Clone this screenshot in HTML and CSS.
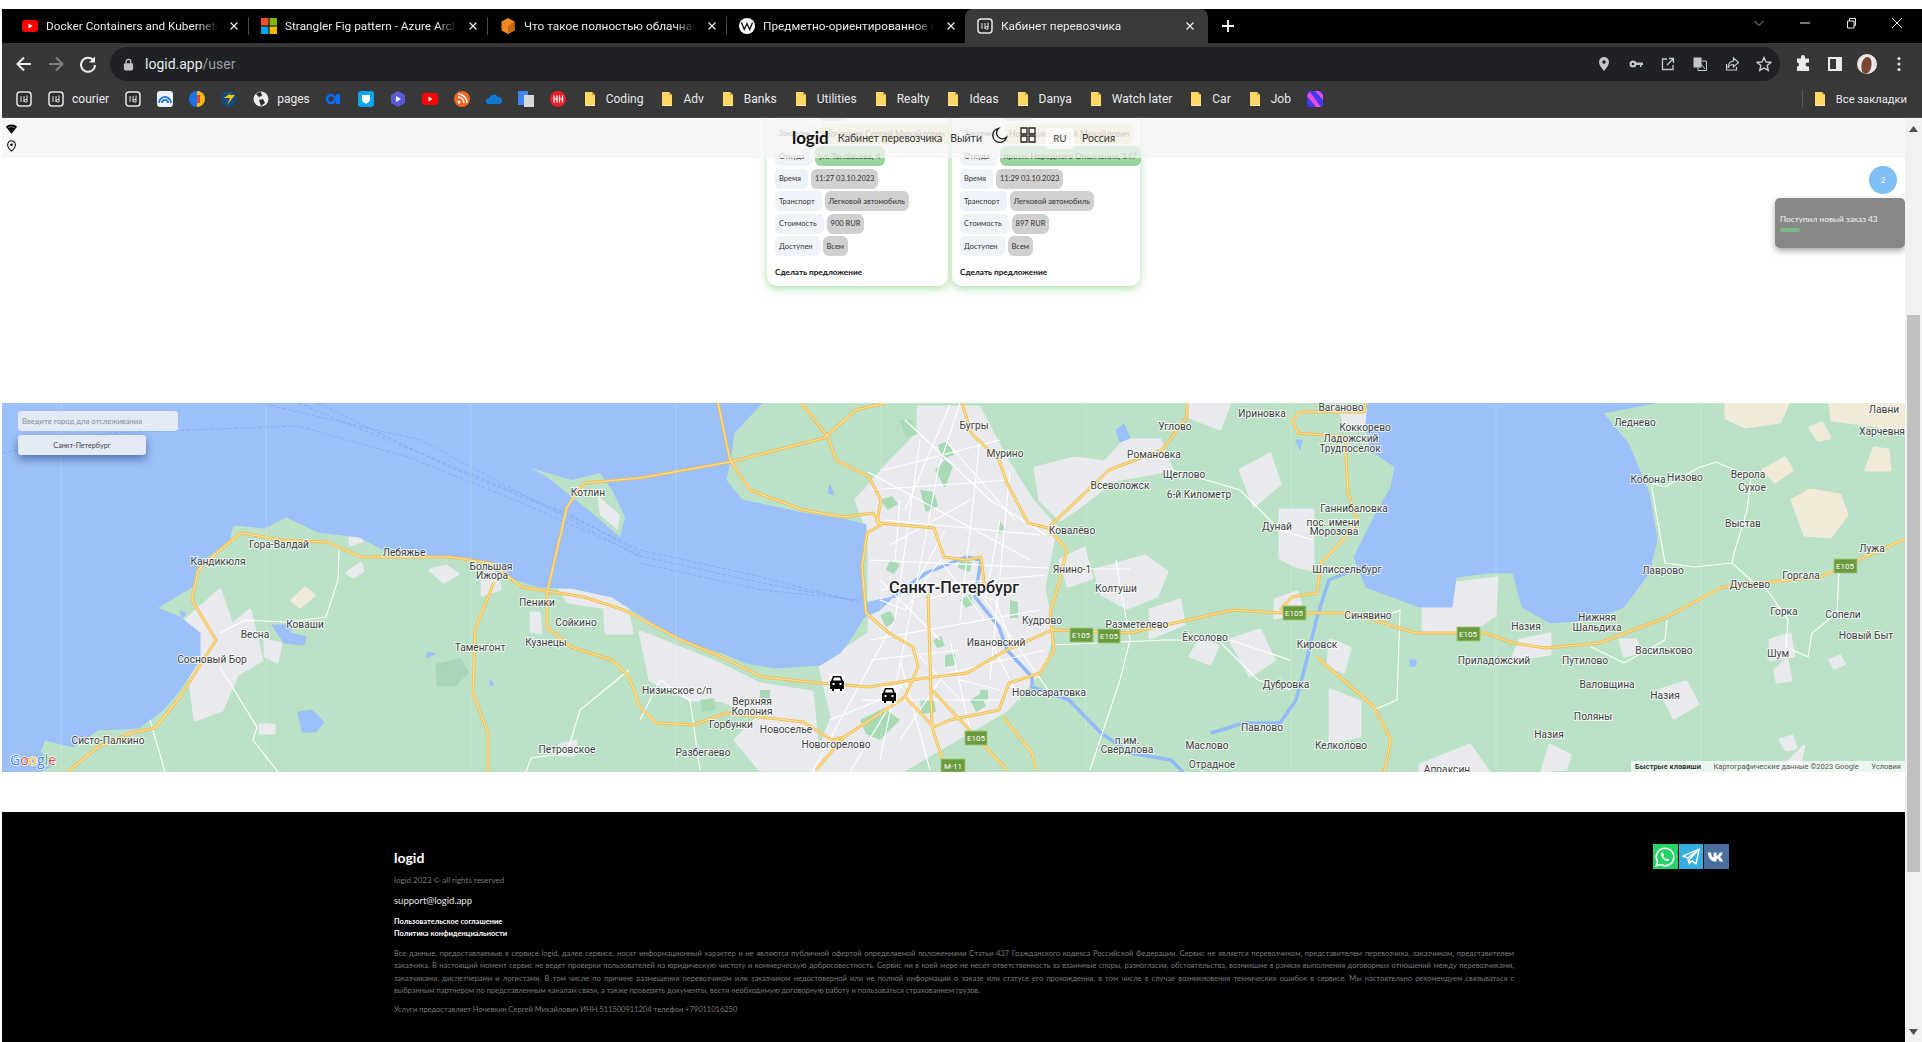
FILE: index.html
```html
<!DOCTYPE html>
<html lang="ru">
<head>
<meta charset="utf-8">
<title>Кабинет перевозчика</title>
<link rel="stylesheet" href="styles.css">
</head>
<body>
<svg class="sprite" aria-hidden="true">
  <symbol id="i-id" viewBox="0 0 16 16"><rect x="1" y="1" width="14" height="14" rx="3" fill="#2b2b2b" stroke="#e6e6e6" stroke-width="1.500"/><path d="M5 5v6M8 5v6M11 4.500v6.500M11 8.500H9.500a1.200 1.200 0 0 0 0 2.500H11" fill="none" stroke="#e6e6e6" stroke-width="1"/></symbol>
  <symbol id="i-yt" viewBox="0 0 16 16"><rect y="2" width="16" height="12" rx="3" fill="#f00"/><path d="M6.500 5.500v5l4-2.500z" fill="#fff"/></symbol>
  <symbol id="i-ms" viewBox="0 0 16 16"><rect width="7.500" height="7.500" fill="#f25022"/><rect x="8.500" width="7.500" height="7.500" fill="#7fba00"/><rect y="8.500" width="7.500" height="7.500" fill="#00a4ef"/><rect x="8.500" y="8.500" width="7.500" height="7.500" fill="#ffb900"/></symbol>
  <symbol id="i-hex" viewBox="0 0 16 16"><path d="M8 0l6.500 3.500v9L8 16l-6.500-3.500v-9z" fill="#f08a24"/><path d="M8 8l6.500-4.500v9L8 16z" fill="#c96a12"/></symbol>
  <symbol id="i-w" viewBox="0 0 16 16"><circle cx="8" cy="8" r="8" fill="#fff"/><path d="M2.500 4.500l2.800 7 2.700-6 2.700 6 2.800-7" fill="none" stroke="#111" stroke-width="1.300"/></symbol>
  <symbol id="i-folder" viewBox="0 0 16 16"><path d="M3 1h7l3 3v11H3z" fill="#fdd663"/><path d="M10 1l3 3h-3z" fill="#c9a93f"/><path d="M4.500 14.500h8.500" stroke="#fff3c4" stroke-width="1"/></symbol>
  <symbol id="i-close" viewBox="0 0 16 16"><path d="M4.500 4.500l7 7M11.500 4.500l-7 7" stroke="#e8eaed" stroke-width="1.300" fill="none"/></symbol>
</svg>

<div class="chrome">
  <div class="tabstrip">
    <div class="tab"><svg class="fav"><use href="#i-yt"/></svg><span class="tab-title">Docker Containers and Kubernetes</span><svg class="tab-x"><use href="#i-close"/></svg></div>
    <div class="tab"><svg class="fav"><use href="#i-ms"/></svg><span class="tab-title">Strangler Fig pattern - Azure Architecture</span><svg class="tab-x"><use href="#i-close"/></svg></div>
    <div class="tab"><svg class="fav"><use href="#i-hex"/></svg><span class="tab-title">Что такое полностью облачная среда</span><svg class="tab-x"><use href="#i-close"/></svg></div>
    <div class="tab tab-last"><svg class="fav"><use href="#i-w"/></svg><span class="tab-title">Предметно-ориентированное проект</span><svg class="tab-x"><use href="#i-close"/></svg></div>
    <div class="tab tab-active"><svg class="fav"><use href="#i-id"/></svg><span class="tab-title">Кабинет перевозчика</span><svg class="tab-x"><use href="#i-close"/></svg></div>
    <svg class="tab-new" viewBox="0 0 16 16"><path d="M8 2v12M2 8h12" stroke="#fff" stroke-width="1.800"/></svg>
    <div class="winctl">
      <svg viewBox="0 0 16 16"><path d="M3.500 6l4.500 4.500L12.500 6" fill="none" stroke="#9aa0a6"/></svg>
      <svg viewBox="0 0 16 16"><path d="M3 8h10" stroke="#e8eaed"/></svg>
      <svg viewBox="0 0 16 16"><path d="M4.500 6h6.500v7H4.500zM6.500 6V3.500h6v7H11" fill="none" stroke="#e8eaed"/></svg>
      <svg viewBox="0 0 16 16"><path d="M3 3l10 10M13 3L3 13" stroke="#e8eaed"/></svg>
    </div>
  </div>

  <div class="toolbar">
    <button class="tbtn"><svg viewBox="0 0 20 20"><path d="M17 10H4M10 3.500L3.500 10l6.500 6.500" fill="none" stroke="#e8eaed" stroke-width="2"/></svg></button>
    <button class="tbtn"><svg viewBox="0 0 20 20"><path d="M3 10h13M10 3.500l6.500 6.500-6.500 6.500" fill="none" stroke="#7c7f82" stroke-width="2"/></svg></button>
    <button class="tbtn"><svg viewBox="0 0 20 20"><path d="M15.500 6.500A7 7 0 1 0 17 11" fill="none" stroke="#e8eaed" stroke-width="2"/><path d="M17 2.500v6h-6z" fill="#e8eaed"/></svg></button>
    <div class="omnibox">
      <svg class="lock" viewBox="0 0 12 14"><rect x="1" y="5.500" width="10" height="8" rx="1.500" fill="#bdc1c6"/><path d="M3.500 6V4a2.500 2.500 0 0 1 5 0v2" fill="none" stroke="#bdc1c6" stroke-width="1.400"/></svg>
      <span class="url">logid.app<span class="url-path">/user</span></span>
      <div class="omni-actions">
        <svg viewBox="0 0 16 16"><path d="M8 1a5 5 0 0 0-5 5c0 3.500 5 9 5 9s5-5.500 5-9a5 5 0 0 0-5-5z" fill="#c4c7c9"/><circle cx="8" cy="6" r="1.800" fill="#202124"/></svg>
        <svg viewBox="0 0 16 16"><circle cx="5" cy="8" r="3.500" fill="#c4c7c9"/><circle cx="5" cy="8" r="1.300" fill="#202124"/><path d="M8 6.500h7v2.500h-1.500v2H12V9H8z" fill="#c4c7c9"/></svg>
        <svg viewBox="0 0 16 16"><path d="M13 9v4.500H2.500V3H7M9 2.500h4.500V7M13.500 2.500L7 9" fill="none" stroke="#c4c7c9" stroke-width="1.300"/></svg>
        <svg viewBox="0 0 16 16"><rect x="1.500" y="1.500" width="8" height="10" fill="#c4c7c9"/><path d="M9.500 5H14.500v9.500H6V11.500" fill="none" stroke="#c4c7c9"/><path d="M9 8l4 5" stroke="#c4c7c9"/></svg>
        <svg viewBox="0 0 16 16"><path d="M2.500 8v6h10v-3M9.500 2l5 4.500-5 4.500V8.500C7 8.500 5 9.500 4 12c0-4 2-6.500 5.500-7z" fill="none" stroke="#c4c7c9" stroke-width="1.200"/></svg>
        <svg viewBox="0 0 16 16"><path d="M8 1.500l2 4.500 4.800.4-3.600 3.200 1.100 4.800L8 11.900l-4.300 2.500 1.100-4.800L1.200 6.400 6 6z" fill="none" stroke="#d5d7d9" stroke-width="1.300"/></svg>
      </div>
    </div>
    <button class="tbtn"><svg viewBox="0 0 20 20"><path d="M8 3a2 2 0 0 1 4 0v1.500h4v4h-1.500a2 2 0 0 0 0 4H16V17H4v-4.500a2 2 0 0 0 0-4V4.500h4z" fill="#e8eaed"/></svg></button>
    <button class="tbtn"><svg viewBox="0 0 20 20"><rect x="3" y="3" width="14" height="14" fill="#e8eaed"/><rect x="5" y="5" width="6" height="10" fill="#373737"/></svg></button>
    <button class="tbtn"><svg viewBox="0 0 22 22"><circle cx="11" cy="11" r="11" fill="#e8e8e8"/><path d="M6 20c-2-5-2-12 3-16 4-2 7 1 7 6s-1 8-4 11c-2 1-4 0-6-1z" fill="#7a4632"/></svg></button>
    <button class="tbtn"><svg viewBox="0 0 20 20"><circle cx="10" cy="4.500" r="1.500" fill="#e8eaed"/><circle cx="10" cy="10" r="1.500" fill="#e8eaed"/><circle cx="10" cy="15.500" r="1.500" fill="#e8eaed"/></svg></button>
  </div>

  <div class="bookmarks">
    <div class="bm"><svg class="fav"><use href="#i-id"/></svg></div>
    <div class="bm"><svg class="fav"><use href="#i-id"/></svg><span>courier</span></div>
    <div class="bm"><svg class="fav"><use href="#i-id"/></svg></div>
    <div class="bm"><svg class="fav" viewBox="0 0 16 16"><rect width="16" height="16" rx="3" fill="#eef3fb"/><path d="M2 12a6 6 0 0 1 12 0M5 12a3 3 0 0 1 6 0" fill="none" stroke="#2f7fe0" stroke-width="2"/></svg></div>
    <div class="bm"><svg class="fav" viewBox="0 0 16 16"><circle cx="8" cy="8" r="8" fill="#1a73e8"/><path d="M8 0a8 8 0 0 1 0 16z" fill="#fbbc04"/><path d="M8 4h3v8H8z" fill="#ea4335"/></svg></div>
    <div class="bm"><svg class="fav" viewBox="0 0 16 16"><circle cx="8" cy="8" r="8" fill="#174a7c"/><path d="M3 7h6l-3 7 8-10H8l3-3z" fill="#f7c600"/></svg></div>
    <div class="bm"><svg class="fav" viewBox="0 0 16 16"><circle cx="8" cy="8" r="7.500" fill="#e8eaed"/><path d="M8 1a7 7 0 0 0-5 2l3 3 3-1zM10 8l-4 1 2 6 4-3z" fill="#2b2b2b"/></svg><span>pages</span></div>
    <div class="bm"><svg class="fav" viewBox="0 0 16 16"><circle cx="5" cy="8" r="4" fill="none" stroke="#0a6cff" stroke-width="2.500"/><path d="M10 3h4v10h-4z" fill="#0a6cff"/></svg></div>
    <div class="bm"><svg class="fav" viewBox="0 0 16 16"><rect width="16" height="16" rx="3" fill="#0aa5f5"/><path d="M4 4h8v6l-4 3-4-3z" fill="#fff"/></svg></div>
    <div class="bm"><svg class="fav" viewBox="0 0 16 16"><path d="M8 0l7 4v8l-7 4-7-4V4z" fill="#5a5ad6"/><path d="M6 5l5 3-5 3z" fill="#fff"/></svg></div>
    <div class="bm"><svg class="fav"><use href="#i-yt"/></svg></div>
    <div class="bm"><svg class="fav" viewBox="0 0 16 16"><circle cx="8" cy="8" r="8" fill="#f26522"/><circle cx="5" cy="11" r="1.500" fill="#fff"/><path d="M4 6a6 6 0 0 1 6 6M4 3a9 9 0 0 1 9 9" fill="none" stroke="#fff" stroke-width="1.500"/></svg></div>
    <div class="bm"><svg class="fav" viewBox="0 0 16 16"><path d="M3 13a3 3 0 0 1 0-6 5 5 0 0 1 9-1 3.500 3.500 0 0 1 1 7z" fill="#0f78d4"/></svg></div>
    <div class="bm"><svg class="fav" viewBox="0 0 16 16"><rect width="10" height="14" fill="#4285f4"/><rect x="6" y="4" width="10" height="12" fill="#d9d9d9"/></svg></div>
    <div class="bm"><svg class="fav" viewBox="0 0 16 16"><circle cx="8" cy="8" r="8" fill="#e8202a"/><path d="M4 4.500v7M4 8h3M7 4.500v7M9.500 4.500v7M9.500 8h3M12.500 4.500v7" stroke="#fff" stroke-width="1.200"/></svg></div>
    <div class="bm"><svg class="fav"><use href="#i-folder"/></svg><span>Coding</span></div>
    <div class="bm"><svg class="fav"><use href="#i-folder"/></svg><span>Adv</span></div>
    <div class="bm"><svg class="fav"><use href="#i-folder"/></svg><span>Banks</span></div>
    <div class="bm"><svg class="fav"><use href="#i-folder"/></svg><span>Utilities</span></div>
    <div class="bm"><svg class="fav"><use href="#i-folder"/></svg><span>Realty</span></div>
    <div class="bm"><svg class="fav"><use href="#i-folder"/></svg><span>Ideas</span></div>
    <div class="bm"><svg class="fav"><use href="#i-folder"/></svg><span>Danya</span></div>
    <div class="bm"><svg class="fav"><use href="#i-folder"/></svg><span>Watch later</span></div>
    <div class="bm"><svg class="fav"><use href="#i-folder"/></svg><span>Car</span></div>
    <div class="bm"><svg class="fav"><use href="#i-folder"/></svg><span>Job</span></div>
    <div class="bm"><svg class="fav" viewBox="0 0 16 16"><rect width="16" height="16" rx="3" fill="#3c3cf0"/><path d="M0 5l9 11h5L3 1zM8 0l8 9V4l-4-4z" fill="#f04bd8"/></svg></div>
    <div class="bm bm-all"><svg class="fav"><use href="#i-folder"/></svg><span>Все закладки</span></div>
  </div>
</div>

<div class="viewport">
  <main class="page">
    <header class="nav">
      <div class="status-icons">
        <svg viewBox="0 0 14 12"><path d="M1 3.500C4 .5 10 .5 13 3.500L7 11z" fill="#000"/><path d="M3.500 4.500c2-1.200 5-1.200 7 0" stroke="#fff" fill="none" stroke-width=".6"/></svg>
        <svg viewBox="0 0 14 14"><path d="M7 1a4.500 4.500 0 0 0-4.500 4.500C2.500 9 7 13 7 13s4.500-4 4.500-7.500A4.500 4.500 0 0 0 7 1z" fill="none" stroke="#000" stroke-width="1.200"/><circle cx="7" cy="5.500" r="1.500" fill="#000"/></svg>
      </div>
      <span class="brand">logid</span>
      <a class="nav-link">Кабинет перевозчика</a>
      <a class="nav-link">Выйти</a>
      <svg class="nav-ico" viewBox="0 0 16 16"><path d="M6.500 1.500a7 7 0 1 0 8 8.800 5.800 5.800 0 0 1-8-8.800z" fill="none" stroke="#222" stroke-width="1.400"/></svg>
      <svg class="nav-ico" viewBox="0 0 16 16"><path d="M1 1h6v6H1zM9 1h6v6H9zM1 9h6v6H1zM9 9h6v6H9z" fill="none" stroke="#222" stroke-width="1.300"/></svg>
      <span class="lang">RU</span>
      <a class="nav-link">Россия</a>
    </header>

    <section class="orders">
      <article class="card card-a">
        <div class="row"><span class="lbl lbl-blank"></span><span class="val val-blank"></span></div>
        <div class="row"><span class="lbl">Заказчик</span><span class="val val-client">Ночевкин Сергей Михайлович</span></div>
        <div class="row"><span class="lbl">Откуда</span><span class="val val-from">ул. Тамбасова, 4</span></div>
        <div class="row"><span class="lbl">Время</span><span class="val">11:27 03.10.2023</span></div>
        <div class="row"><span class="lbl">Транспорт</span><span class="val">Легковой автомобиль</span></div>
        <div class="row"><span class="lbl">Стоимость</span><span class="val">900 RUR</span></div>
        <div class="row"><span class="lbl">Доступен</span><span class="val">Всем</span></div>
        <a class="offer">Сделать предложение</a>
      </article>
      <article class="card card-b">
        <div class="row"><span class="lbl lbl-blank"></span><span class="val val-blank"></span></div>
        <div class="row"><span class="lbl">Заказчик</span><span class="val val-client">Ночевкин Сергей Михайлович</span></div>
        <div class="row"><span class="lbl">Откуда</span><span class="val val-from">просп. Народного Ополчения, 147</span></div>
        <div class="row"><span class="lbl">Время</span><span class="val">11:29 03.10.2023</span></div>
        <div class="row"><span class="lbl">Транспорт</span><span class="val">Легковой автомобиль</span></div>
        <div class="row"><span class="lbl">Стоимость</span><span class="val">897 RUR</span></div>
        <div class="row"><span class="lbl">Доступен</span><span class="val">Всем</span></div>
        <a class="offer">Сделать предложение</a>
      </article>
    </section>

    <div class="badge">2</div>
    <div class="toast"><span>Поступил новый заказ 43</span><i class="toast-bar"></i></div>

    <section class="map">
      <svg class="map-svg" viewBox="2 403 1903 369">
        <defs>
          <g id="hw">
            <path d="M640 478L584 483 567 507 547 593V627L571 647 612 660 629 677 640 707 656 723 693 725 726 713 803 722 832 740 844 737 905 697"/>
            <path d="M640 478L730 462 824 438 856 410 885 403"/>
            <path d="M67 772L98 747 131 733 155 728 180 697 216 640 192 600 198 570 220 550 241 533 282 540 327 542 361 557 449 557 490 563 522 587 584 597 624 610 681 640 722 657 762 677 820 683 869 687 926 678 967 673 1007 650 1052 630 1130 633 1179 622 1232 610 1280 613 1345 613 1374 620 1415 633 1485 633 1513 643 1546 648 1599 643 1665 618 1722 587 1771 582 1820 577 1905 539"/>
            <path d="M718 403L730 460 750 490 803 510 844 517 873 513 881 525 867 533 862 567 866 613 889 633 913 647 918 667 905 697 934 727 950 720 999 710 1009 683 1040 673 1054 650 1050 613 1058 587 1067 550 1048 528 1028 523 1007 483 999 460 971 433 962 403"/>
            <path d="M877 523L934 528 944 557 966 560 981 557 985 590"/>
            <path d="M801 403L828 437 836 460 869 477 881 500 877 523"/>
            <path d="M1048 528L1109 470 1162 450 1187 417V403"/>
            <path d="M928 593L932 727 946 770M932 690L1007 770M1003 717L1032 753 1036 770M844 737L816 770"/>
            <path d="M1366 403L1364 412 1300 412 1292 420 1298 433 1345 437 1348 493 1358 523 1321 563 1317 593 1292 597 1280 610M1317 657L1374 707 1391 740 1384 772"/>
            <path d="M494 582L475 630 473 693 488 733V772"/>
          </g>
        </defs>

        <rect class="land" x="2" y="403" width="1903" height="369"/>

        <!-- sand and forest -->
        <path class="sand" d="M1726 403H1788L1780 422 1745 427 1726 418zM1830 403H1905V430L1870 425 1832 420zM1792 500L1810 490 1840 495 1847 515 1830 537 1805 535zM1763 470L1785 458 1792 470 1775 482zM1866 470L1874 448 1888 450 1890 470zM1810 428L1822 423 1830 438 1818 440zM292 600L305 588 314 595 300 607z"/>
        <path class="forest" d="M437 665L460 660 467 672 455 685 438 685z"/>

        <!-- urban -->
        <path class="urban" d="M918 407L979 407 1007 460 1032 500 1056 527 1044 587 1052 633 1044 667 1007 710 967 733 901 772H811L832 717 820 667 869 633V533L856 500 885 467 918 433z"/>
        <path class="urban" d="M640 632L680 648 720 664 760 684 812 692 820 770H760L735 740 760 715 720 700 690 700 650 680z"/>
        <path class="urban" d="M1035 468L1075 458 1105 462 1125 440 1160 440 1172 470 1115 480 1075 510 1060 520 1040 500zM1095 570l50-14 22 16-10 24-30 12-26-14zM1060 560l24-12 8 30-24 8zM1150 610l30-10 4 24-34 14zM1200 640l-10 16 20 8 8-18zM1230 640l30-10 14 30-24 16zM1190 403h40l-10 26-30-12zM1240 470l30-16 10 30-26 22zM1280 510l33 0 0 60-18-4-15-8zM1275 600l22-8 6 20-28 6zM1340 410l26 0 0 12-20 6zM1330 640l20 8-6 24-16-6zM1330 690l30 12 0 34-30 6zM1423 587L1497 578 1495 615 1470 633 1423 630zM1520 640l30-6 0 20-38 6zM1660 690l26-8 12 22-24 14zM1770 640l20-6 4 22-24 4zM1775 670l12-10 4 20-14 2zM1780 770l24-24-6 26zM1780 740l12-4 4 12-10 2zM1550 745l20 10-4 14-24 2zM1420 765l50-20 18 26-68 1zM1620 640l16 0 4 12-16 4zM1830 660l10-4 4 8-10 4z"/>
        <path class="urban" d="M180 625L220 590 232 625 250 610 262 660 237 675 222 710 195 720 190 680 200 650zM265 640l16 4-4 18-12-6zM260 725l14 0 0 8-14 0zM347 573l14-10 2 8-10 6zM350 537l10-4 2 8-12 4zM430 570l16-4 12 8-14 8zM482 575l16-6 2 20-18 6zM560 590l40 2 8 16-40-6zM531 613l8 0 2 20-10-2zM604 595l22 8 6 30-26 0zM560 745l16-4-2 14-14 0z"/>
        <path class="park" d="M935 470l10-10 8 6-8 22zM920 490l14 2 4 14-12 6zM960 560l12 2-2 10-12-4zM890 560l10 4-6 10-8-4zM945 655l10-2 0 12-10 2zM933 640l8-4 4 10-8 2zM980 690l8 0 0 10-8 2zM1000 520l6 10-8 4zM880 500l12-4 6 8-10 6zM960 600l10-6 4 10-8 4zM970 700l10-6 6 12-10 6zM900 420l12 0 6 14-12 4zM938 445l10-4 6 14-12 4zM860 720l24-12 16 12-20 20-14-6zM880 615l10-4 6 10-10 6zM920 700l14 0 2 12-14 2zM1010 600l8 2 0 16-8 0zM760 690l10 0 0 12-10 0zM700 700l14-2 2 12-14 2z"/>

        <!-- water -->
        <path class="water" d="M2 403H762L734 433 730 462 726 480 742 500 803 513 848 520 866 525 866 533 862 557 862 580 864 603 893 597 880 610 864 617 852 637 840 653 820 665 775 668 746 663 722 653 681 640 640 615 612 597 571 588 539 587 506 577 469 557 424 555 384 550 359 537 318 532 286 517 265 528 233 525 229 540 204 560 192 587 157 608 180 617 200 633 200 660 180 690 163 710 139 728 98 730 73 747 45 740 40 752 55 764 40 772H2z"/>
        <path class="land" d="M531 468L571 480 600 473 612 490 625 517 620 537 592 513 567 493 547 477z"/>
        <path class="urban-s" d="M597 495L620 515 618 530 600 515z"/>
        <path class="water" d="M1368 403L1366 423 1370 450 1395 467 1391 487 1378 510 1366 533 1354 557 1366 587 1419 607 1452 607 1456 577 1489 573 1513 573 1522 607 1550 623 1591 620 1624 607 1649 573 1657 540 1649 493 1628 443 1603 413 1655 403z"/>
        <path class="water" d="M298 712L312 710 324 722 316 732 302 732z"/>
        <path class="water" d="M272 625l18 0 0 8 16 4-2 8-20-2zM180 610l6 4-4 4zM427 652l8 2-8 4zM490 680l4 4-4 2zM1410 660l6 0 0 6-6 0zM830 485l4 10-6-2zM1116 430l8-6 6 14-10 4zM1296 440l6 0-2 10z"/>
        <path class="river" d="M893 597L926 573 966 557 981 560 975 597 999 627 1007 650 1032 677 1032 687 1069 700 1101 733 1130 753 1171 760 1183 772M1211 733L1244 723H1280L1296 700 1305 667 1317 617 1329 580 1354 570"/>

        <!-- shipping lanes -->
        <g class="lane">
          <path d="M259 403L420 440 571 520 640 557M298 403L571 515 640 553M318 403L449 467 571 517 640 550M2 453L110 433 298 426 408 457 522 503 640 555"/>
          <path d="M640 550L762 577 860 603M640 563L762 590 860 600M640 556L762 583 860 601"/>
        </g>

        <!-- streets -->
        <g class="street">
          <path d="M960 403L938 470 925 540 905 640 880 760M905 420L990 500 1046 535M868 472L1030 560M870 560L1048 568M880 590L1045 575M885 520L1040 535M920 440L895 620M980 440L960 620M1010 470L990 680M870 640L1040 610M880 690L1045 650M900 660L930 770M950 640L970 730M990 640L1020 700M850 772L905 680M862 700H1000M985 600L1048 690"/>
          <path d="M940 560L905 610 880 600M940 560L985 620M925 600L960 590 995 600 1010 640M915 585L945 530M885 470L1000 440M870 490L1010 480M890 545L970 500M950 405L905 510M945 440L1015 520M900 500L895 560M1000 520L985 600M880 580L940 640M905 640L960 700M870 660L960 650M940 680L900 740M960 680L1000 690M830 720L880 700"/>
          <path d="M1052 645L1165 640 1218 640 1258 680 1290 690M1116 560L1120 585 1130 640 1120 680 1090 770M1060 569H1130M812 772L895 620M640 720L660 680 690 700 700 770M1172 470L1240 490 1280 530M1280 530L1313 540M1230 640L1290 660"/>
          <path d="M220 633L245 620 286 622 326 617 338 580 339 550M220 667L257 727 253 740 278 772M150 720L165 772M629 670L580 710 567 753 531 758 526 772"/>
          <path d="M1651 483L1665 563 1694 567 1732 563 1751 580 1767 590 1788 620 1786 647 1808 657 1812 633 1837 613 1839 570M1651 483L1665 487 1698 468 1716 462 1751 477 1747 510 1733 557 1732 563M1591 647L1624 663 1665 640 1667 620M1374 620L1400 610 1397 700 1374 710"/>
        </g>
        <use href="#hw" class="hw-case"/>
        <use href="#hw" class="hw-fill"/>

        <g class="tile">
          <path d="M61 403V772M266 403V772M471 403V772M676 403V772M881 403V772M1086 403V772M1291 403V772M1496 403V772M1701 403V772"/>
        </g>

        <!-- shields -->
        <g class="shield">
          <rect x="1070" y="628" width="23" height="14"/><text x="1081" y="635">E105</text>
          <rect x="1098" y="629" width="22" height="14"/><text x="1109" y="636">E105</text>
          <rect x="965" y="731" width="22" height="14"/><text x="976" y="738">E105</text>
          <rect x="941" y="759" width="24" height="13"/><text x="953" y="766">M-11</text>
          <rect x="1283" y="606" width="23" height="14"/><text x="1294" y="613">E105</text>
          <rect x="1457" y="627" width="23" height="14"/><text x="1468" y="634">E105</text>
          <rect x="1834" y="559" width="23" height="14"/><text x="1845" y="566">E105</text>
        </g>

        <!-- labels -->
        <g class="lab">
          <text x="279" y="544">Гора-Валдай</text><text x="218" y="561">Кандикюля</text><text x="404" y="552">Лебяжье</text><text x="491" y="566">Большая</text><text x="492" y="575">Ижора</text><text x="588" y="492">Котлин</text><text x="537" y="602">Пеники</text><text x="576" y="622">Сойкино</text><text x="546" y="642">Кузнецы</text><text x="480" y="647">Таменгонт</text><text x="305" y="624">Коваши</text><text x="255" y="634">Весна</text><text x="212" y="659">Сосновый Бор</text><text x="108" y="740">Систо-Палкино</text><text x="567" y="749">Петровское</text>
          <text x="974" y="425">Бугры</text><text x="1005" y="453">Мурино</text><text x="1175" y="426">Углово</text><text x="1154" y="454">Романовка</text><text x="1184" y="474">Щеглово</text><text x="1120" y="485">Всеволожск</text><text x="1199" y="494">6-й Километр</text><text x="1072" y="530">Ковалёво</text><text x="1072" y="569">Янино-1</text><text x="1116" y="588">Колтуши</text><text x="1042" y="620">Кудрово</text><text x="1137" y="624">Разметелево</text><text x="1205" y="637">Ёксолово</text><text x="996" y="642">Ивановский</text><text x="1049" y="692">Новосаратовка</text><text x="677" y="690">Низинское с/п</text><text x="752" y="701">Верхняя</text><text x="752" y="711">Колония</text><text x="731" y="724">Горбунки</text><text x="786" y="729">Новоселье</text><text x="836" y="744">Новогорелово</text><text x="703" y="752">Разбегаево</text><text x="1127" y="740">п.им.</text><text x="1127" y="749">Свердлова</text><text x="1207" y="745">Маслово</text><text x="1212" y="764">Отрадное</text><text x="1262" y="727">Павлово</text><text x="1262" y="413">Ириновка</text><text x="1277" y="526">Дунай</text><text x="1286" y="684">Дубровка</text>
          <text x="1341" y="407">Ваганово</text><text x="1365" y="427">Коккорево</text><text x="1351" y="438">Ладожский</text><text x="1350" y="448">Трудпоселок</text><text x="1354" y="508">Ганнибаловка</text><text x="1333" y="522">пос. имени</text><text x="1334" y="531">Морозова</text><text x="1347" y="569">Шлиссельбург</text><text x="1368" y="615">Синявино</text><text x="1317" y="644">Кировск</text><text x="1494" y="660">Приладожский</text><text x="1585" y="660">Путилово</text><text x="1526" y="626">Назия</text><text x="1597" y="617">Нижняя</text><text x="1597" y="627">Шальдиха</text><text x="1664" y="650">Васильково</text><text x="1607" y="684">Валовщина</text><text x="1665" y="695">Назия</text><text x="1593" y="716">Поляны</text><text x="1549" y="734">Назия</text><text x="1341" y="745">Келколово</text><text x="1447" y="769">Апраксин</text><text x="1635" y="422">Леднево</text><text x="1648" y="479">Кобона</text><text x="1685" y="477">Низово</text><text x="1748" y="474">Верола</text><text x="1752" y="487">Сухое</text><text x="1743" y="523">Выстав</text><text x="1663" y="570">Лаврово</text><text x="1801" y="575">Горгала</text><text x="1872" y="548">Лужа</text><text x="1750" y="584">Дусьево</text><text x="1784" y="611">Горка</text><text x="1843" y="614">Сопели</text><text x="1866" y="635">Новый Быт</text><text x="1778" y="653">Шум</text><text x="1884" y="409">Лавни</text><text x="1882" y="431">Харчевня</text>
        </g>
        <text class="lab-city" x="954" y="593">Санкт-Петербург</text>

        <!-- vehicles -->
        <g class="car"><rect x="829" y="674" width="16" height="18" fill="#fff" opacity=".6"/><path d="M831 681l2-5h8l2 5h1v8h-2v2h-2v-2h-6v2h-2v-2h-2v-8z"/><path d="M834 677.500h6l1 3h-8zM832.500 683h2v2h-2zM839.500 683h2v2h-2z" fill="#fff"/></g>
        <g class="car"><rect x="881" y="686" width="16" height="18" fill="#fff" opacity=".6"/><path d="M883 693l2-5h8l2 5h1v8h-2v2h-2v-2h-6v2h-2v-2h-2v-8z"/><path d="M886 689.500h6l1 3h-8zM884.500 695h2v2h-2zM891.500 695h2v2h-2z" fill="#fff"/></g>

        <!-- attribution -->
        <text class="g-logo" x="10" y="765"><tspan fill="#4285f4">G</tspan><tspan fill="#ea4335">o</tspan><tspan fill="#fbbc05">o</tspan><tspan fill="#4285f4">g</tspan><tspan fill="#34a853">l</tspan><tspan fill="#ea4335">e</tspan></text>
      </svg>
      <div class="search">
        <input class="search-input" type="text" placeholder="Введите город для отслеживания">
        <button class="search-option">Санкт-Петербург</button>
      </div>
      <div class="attrib"><b>Быстрые клавиши</b><span>Картографические данные ©2023 Google</span><span>Условия</span></div>
    </section>

    <footer class="footer">
      <div class="foot-main">
        <div class="foot-logo">logid</div>
        <div class="foot-rights">logid 2023 © all rights reserved</div>
        <div class="foot-mail">support@logid.app</div>
        <div class="foot-links"><a>Пользовательское соглашение</a><a>Политика конфиденциальности</a></div>
        <p class="foot-legal">
          <span>Все данные, предоставляемые в сервисе logid, далее сервисе, носят информационный характер и не являются публичной офертой определяемой положениями Статьи 437 Гражданского кодекса Российской Федерации. Сервис не является перевозчиком, представителем перевозчика, заказчиком, представителем</span>
          <span>заказчика. В настоящий момент сервис не ведет проверки пользователей на юридическую чистоту и коммерческую добросовестность. Сервис ни в коей мере не несет ответственность за взаимные споры, разногласия, обстоятельства, возникшие в рамках выполнения договорных отношений между перевозчиками,</span>
          <span>заказчиками, диспетчерами и логистами. В том числе по причине размещения перевозчиком или заказчиком недостоверной или не полной информации о заказе или статусе его прохождения, в том числе в случае возникновения технических ошибок в сервисе. Мы настоятельно рекомендуем связываться с</span>
          <span class="legal-last">выбранным партнером по представленным каналам связи, а также проверять документы, вести необходимую договорную работу и пользоваться страхованием грузов.</span>
        </p>
        <div class="foot-owner">Услуги предоставляет Ночевкин Сергей Михайлович ИНН 511500911204 телефон +79011016250</div>
      </div>
      <div class="social">
        <a class="soc soc-wa"><svg viewBox="0 0 24 24"><path d="M12 2.500a9.500 9.500 0 0 0-8.200 14.300L2.500 21.500l4.800-1.300A9.500 9.500 0 1 0 12 2.500z" fill="none" stroke="#fff" stroke-width="1.800"/><path d="M8.500 7c-1 1-1.200 2.500-.2 4.500 1 2 3 4 5.200 4.800 1.500.5 2.800 0 3.300-1.300l-2.200-1.500-1 1c-1.500-.5-3-2-3.500-3.500l1-1L9.800 7z" fill="#fff"/></svg></a>
        <a class="soc soc-tg"><svg viewBox="0 0 24 24"><path d="M21 3.500L3 11l5.500 2 1.500 6.500 3-3.500 4.500 3.500zM8.500 13L19 5.500 10.500 14.500 10 19.500" fill="none" stroke="#fff" stroke-width="1.500" stroke-linejoin="round"/></svg></a>
        <a class="soc soc-vk"><svg viewBox="0 0 24 24"><path d="M3 7h3.500c.3 3 1.500 5 3 5.500V7h3.200v3.800c1.500-.2 2.700-1.800 3.300-3.800h3.300c-.5 2.500-2 4.300-3.300 5 1.500.8 3 2.300 3.800 5h-3.600c-.6-2-2-3.300-3.500-3.500V17h-.8C7 17 3.500 13.500 3 7z" fill="#fff"/></svg></a>
      </div>
    </footer>
  </main>

  <aside class="scrollbar">
    <svg class="sb-arrow" viewBox="0 0 9 6"><path d="M4.500 0L9 6H0z"/></svg>
    <div class="sb-track"><div class="sb-thumb"></div></div>
    <svg class="sb-arrow" viewBox="0 0 9 6"><path d="M0 0h9L4.500 6z"/></svg>
  </aside>
</div>
</body>
</html>
```

FILE: styles.css
```css
* { box-sizing: border-box; }
html, body { margin: 0; height: 100%; }
body {
  width: 1922px; height: 1042px; overflow: hidden; background: #fff;
  padding: 9px 0 0 2px; display: flex; flex-direction: column;
  font-family: "Lato", "Open Sans", "Noto Sans", sans-serif;
}
a { cursor: pointer; }
.sprite { position: absolute; width: 0; height: 0; }

/* browser chrome */
.chrome { font-family: Roboto, "Noto Sans", sans-serif; color: #e8eaed; flex: none; }
.tabstrip { height: 34px; background: #000; display: flex; align-items: center; padding-left: 8px; }
.fav { width: 16px; height: 16px; flex: none; }
.tab { width: 239px; height: 34px; display: flex; align-items: center; padding: 0 7px 0 12px; gap: 8px; position: relative; flex: none; font-size: 11.800px; }
.tab::after { content: ""; position: absolute; right: 0; top: 8px; height: 18px; width: 1px; background: #4a4a4a; }
.tab-last::after { display: none; }
.tab-title { flex: 1; min-width: 0; white-space: nowrap; overflow: hidden; -webkit-mask-image: linear-gradient(90deg, #000 88%, transparent); mask-image: linear-gradient(90deg, #000 88%, transparent); }
.tab-x { width: 16px; height: 16px; flex: none; }
.tab-active { background: #3a3a3a; border-radius: 8px 8px 0 0; width: 243px; margin-left: -1px; padding-right: 10px; }
.tab-active::after { display: none; }
.tab-new { width: 16px; height: 16px; margin-left: 12px; }
.winctl { margin-left: auto; display: flex; padding-right: 2px; align-self: flex-start; padding-top: 6px; }
.winctl svg { width: 16px; height: 16px; margin: 0 15px; }

.toolbar { height: 40px; background: #373737; display: flex; align-items: center; padding: 2px 7px 0 6px; }
.tbtn { width: 32px; height: 32px; padding: 0; border: 0; background: none; display: flex; align-items: center; justify-content: center; flex: none; }
.tbtn svg { width: 20px; height: 20px; }
.omnibox { flex: 1; height: 34px; background: #202124; border-radius: 17px; margin: 0 7px 0 6px; display: flex; align-items: center; padding-left: 13px; }
.lock { width: 11px; height: 13px; margin-right: 11px; }
.url { font-size: 14px; color: #e8eaed; }
.url-path { color: #9aa0a6; }
.omni-actions { margin-left: auto; display: flex; }
.omni-actions svg { width: 16px; height: 16px; margin: 0 8px; }

.bookmarks { height: 35px; background: #383838; border-bottom: 1px solid #4a4a4a; display: flex; align-items: center; padding: 0 0 2px 6px; font-size: 12px; }
.bm { display: flex; align-items: center; gap: 8px; padding: 0 8px; flex: none; }
.bm-all { margin-left: auto; margin-right: 7px; border-left: 1px solid #5a5a5a; padding-left: 9px; height: 18px; font-size: 11.200px; }

/* page */
.viewport { flex: 1; min-height: 0; display: flex; }
.page { flex: 1; min-width: 0; position: relative; overflow: hidden; background: #fff; display: flex; flex-direction: column; color: #222; }

.nav { position: absolute; z-index: 5; top: 0; left: 0; right: 0; height: 40px; background: rgba(245,245,245,.78); display: flex; align-items: center; justify-content: center; gap: 8px; }
.status-icons { position: absolute; left: 3px; top: 5px; display: flex; flex-direction: column; gap: 5px; }
.status-icons svg { width: 13px; height: 12px; display: block; }
.brand { font-weight: 700; font-size: 17px; color: #111; margin: -2px 1px 0 0; }
.nav-link { font-size: 10.500px; color: #333; }
.nav-ico { width: 16px; height: 16px; margin: -6px 2px 0 2px; }
.lang { width: 28px; height: 21px; background: rgba(255,255,255,.7); border-radius: 3px; font-size: 10px; color: #444; display: flex; align-items: center; justify-content: center; }

.orders { height: 285px; flex: none; overflow: hidden; display: flex; justify-content: center; align-items: flex-end; gap: 4px; padding-bottom: 117px; }
.card { flex: none; background: #fff; border-radius: 10px; box-shadow: 0 3px 8px rgba(110,200,110,.55); padding: 0 8px 9px; display: flex; flex-direction: column; gap: 2.500px; font-size: 7.500px; color: #333; }
.card-a { width: 181px; }
.card-b { width: 188px; }
.row { display: flex; gap: 2.500px; height: 20px; }
.lbl { background: #eff3f9; border-radius: 5px; padding: 0 7.500px 0 4px; display: flex; align-items: center; white-space: nowrap; }
.val { background: #d0d0d0; border-radius: 6px; padding: 0 4px; display: flex; align-items: center; white-space: nowrap; }
.lbl-blank { width: 40px; }
.val-blank { width: 30px; }
.val-client { background: #f7e9b4; font-size: 8.600px; }
.val-from { background: #98d49b; font-size: 8.400px; }
.offer { font-weight: 700; font-size: 8.200px; line-height: 10px; color: #111; margin-top: 8.500px; }

.badge { position: absolute; z-index: 6; left: 1867px; top: 48px; width: 28px; height: 28px; border-radius: 50%; background: #7ebef5; color: #fff; font-size: 8px; display: flex; align-items: center; justify-content: center; }
.toast { position: absolute; z-index: 6; right: 0; top: 80px; width: 130px; height: 50px; background: #888; border-radius: 5px; box-shadow: 0 3px 6px rgba(0,0,0,.35); padding: 16px 5px 0; color: #f5f5f5; font-size: 8.300px; display: flex; flex-direction: column; gap: 4px; }
.toast-bar { display: block; width: 20px; height: 4px; border-radius: 2px; background: #7db886; }

/* map */
.map { height: 369px; flex: none; position: relative; overflow: hidden; }
.map-svg { display: block; width: 1903px; height: 369px; font-family: Roboto, "Noto Sans", sans-serif; }
.land { fill: #bbe2c6; }
.sand { fill: #f1ead9; stroke: #f1ead9; stroke-width: 3; stroke-linejoin: round; }
.forest { fill: #a9d6b8; stroke: #a9d6b8; stroke-width: 3; stroke-linejoin: round; }
.park { fill: #a8dab5; }
.urban { fill: #e8eaed; stroke: #e8eaed; stroke-width: 3; stroke-linejoin: round; }
.urban-s { fill: #e8eaed; }
.water { fill: #9cc0f9; stroke: #9cc0f9; stroke-width: 1; stroke-linejoin: round; }
.river { fill: none; stroke: #92b9f8; stroke-width: 3.500; stroke-linejoin: round; }
.lane { fill: none; stroke: #7ea9f3; stroke-width: .8; stroke-dasharray: 4 2; }
.street { fill: none; stroke: #fff; stroke-width: 1.100; }
.hw-case { fill: none; stroke: #f2bd57; stroke-width: 3; stroke-linejoin: round; }
.hw-fill { fill: none; stroke: #fde293; stroke-width: 1.200; stroke-linejoin: round; }
.tile { fill: none; stroke: rgba(255,255,255,.2); stroke-width: 1; }
.shield rect { fill: #6a9a3e; stroke: #9fc479; stroke-width: 1; }
.shield text { fill: #fff; font-size: 8px; text-anchor: middle; dominant-baseline: central; }
.lab text { font-size: 10.200px; fill: #3c4043; text-anchor: middle; dominant-baseline: central; paint-order: stroke; stroke: #fff; stroke-width: 2px; stroke-opacity: .75; }
.lab-city { font-size: 16.300px; font-weight: 500; fill: #202124; text-anchor: middle; paint-order: stroke; stroke: #fff; stroke-width: 2.500px; stroke-opacity: .8; }
.car { fill: #000; }
.g-logo { font-family: "Open Sans", Roboto, sans-serif; font-size: 14px; paint-order: stroke; stroke: #fff; stroke-width: 1.500px; }

.search { position: absolute; left: 16px; top: 8px; display: flex; flex-direction: column; gap: 4px; align-items: flex-start; }
.search-input { width: 160px; height: 20px; border: 0; outline: 0; border-radius: 3px; background: #e3e9f5; padding: 0 4px; font: 7.700px "Lato", sans-serif; }
.search-input::placeholder { color: #8a8f98; }
.search-option { width: 128px; height: 20px; border: 0; border-radius: 3px; background: #e3e9f5; font: 7.200px "Lato", sans-serif; color: #444; box-shadow: 0 4px 8px rgba(30,50,100,.55); padding: 0; }
.attrib { position: absolute; right: 0; bottom: 0; height: 11px; width: 274px; background: rgba(255,255,255,.7); display: flex; align-items: center; justify-content: space-between; padding: 0 4px; font: 7.500px/11px Roboto, sans-serif; color: #555; white-space: nowrap; }
.attrib b { font-weight: 500; color: #222; }

/* footer */
.footer { margin-top: 40px; flex: 1; background: #000; display: flex; padding: 32px 0 0 392px; }
.foot-main { width: 1120px; flex: none; padding-top: 4px; }
.foot-logo { font-weight: 700; font-size: 14px; line-height: 20px; color: #fff; }
.foot-rights { margin-top: 6px; font-size: 8px; line-height: 12px; color: #777; }
.foot-mail { margin-top: 8px; font-size: 9.500px; line-height: 14px; color: #e6e6e6; }
.foot-links { margin-top: 8px; display: flex; flex-direction: column; font-size: 7.500px; line-height: 12px; font-weight: 700; color: #fff; }
.foot-legal { margin: 8px 0 0; font-size: 7.500px; line-height: 12.300px; color: #7a7a7a; }
.foot-legal span { display: block; text-align: justify; text-align-last: justify; white-space: nowrap; overflow: hidden; }
.foot-legal .legal-last { text-align-last: left; }
.foot-owner { margin-top: 7px; font-size: 7.500px; line-height: 12px; color: #7a7a7a; }
.social { margin-left: 139px; display: flex; height: 25px; gap: 1px; }
.soc { width: 24.500px; height: 25px; display: flex; align-items: center; justify-content: center; }
.soc svg { width: 22px; height: 22px; }
.soc-wa { background: #25d366; }
.soc-tg { background: #37aee2; }
.soc-vk { background: #4a6f9f; }

/* scrollbar */
.scrollbar { width: 17px; flex: none; background: #f1f1f1; display: flex; flex-direction: column; align-items: center; padding: 8px 0 7px; }
.sb-arrow { width: 9px; height: 6px; fill: #505050; flex: none; }
.sb-track { flex: 1; width: 100%; padding: 183px 2px 0; }
.sb-thumb { height: 557px; background: #c1c1c1; }
```
